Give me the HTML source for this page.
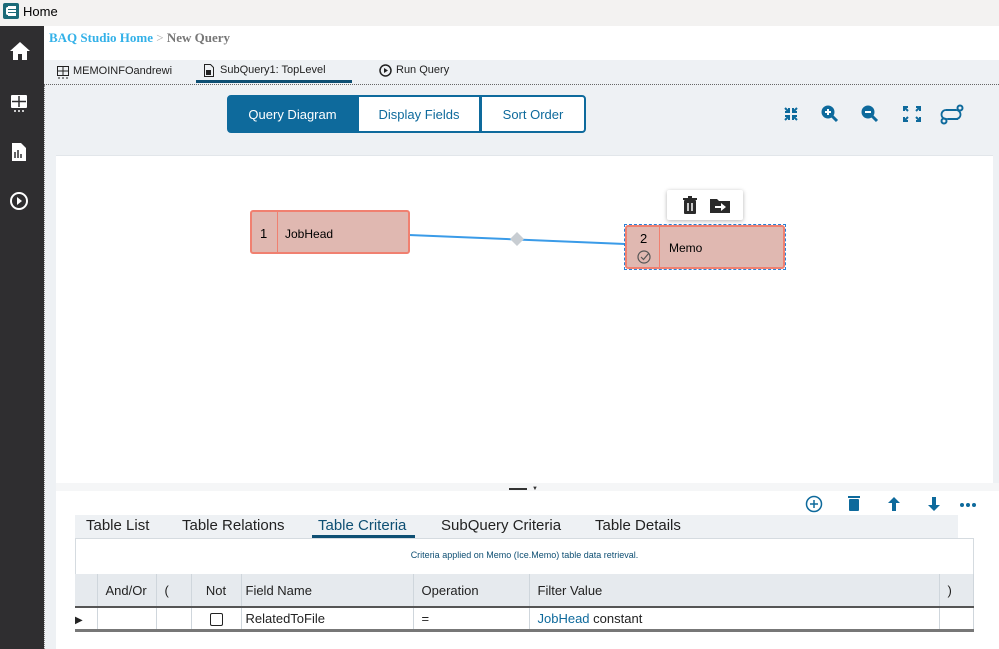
<!DOCTYPE html>
<html><head><style>
*{margin:0;padding:0;box-sizing:border-box}
body{width:999px;height:649px;overflow:hidden;font-family:"Liberation Sans",sans-serif;background:#fff;position:relative}
.abs{position:absolute}
.tb{left:0;top:0;width:999px;height:26px;background:#f3f2f1;font-size:13px}
.side{left:0;top:26px;width:44px;height:623px;background:#2f2e30}
.btn{height:38px;top:95px;border:2px solid #0e6a9c;color:#0e6a9c;font-size:13px;display:flex;align-items:center;justify-content:center;background:#fff}
.nar{font-family:"Liberation Sans Narrow","Liberation Sans",sans-serif}
.node{background:#e0b8b1;border:2px solid #f08070;border-radius:3px;font-size:12px}
th,td{border-right:1px solid #cfd6dc;font-weight:normal;text-align:left;padding-left:8px}
</style></head><body>
<div class="abs tb"><div class="abs" style="left:3px;top:3px;width:16px;height:16px;background:#1b6a78;border-radius:2px"><div class="abs" style="left:3px;top:4px;width:10px;height:8px;border:2px solid #fff;border-right:none;border-radius:2px 0 0 2px"></div><div class="abs" style="left:3px;top:7px;width:10px;height:2px;background:#fff"></div><div class="abs" style="left:5px;top:3px;width:8px;height:2px;background:#fff"></div><div class="abs" style="left:5px;top:11px;width:8px;height:2px;background:#fff"></div></div><span class="abs" style="left:23px;top:4px">Home</span></div>
<div class="abs side">
<svg class="abs" style="left:9px;top:15px" width="22" height="20" viewBox="0 0 22 20"><path d="M11 1L1 10h3v9h5v-6h4v6h5v-9h3z" fill="#fff"/></svg>
<svg class="abs" style="left:10px;top:68px" width="18" height="20" viewBox="0 0 18 20"><rect x="1" y="1" width="16" height="13" rx="1" fill="#fff"/><path d="M2 7.5h14M9 2v11" stroke="#2f2e30" stroke-width="1.5"/><path d="M4 17h2M8 17h2M12 17h2" stroke="#fff" stroke-width="1.5"/></svg>
<svg class="abs" style="left:11px;top:116px" width="16" height="20" viewBox="0 0 16 20"><path d="M1 1h9l5 5v13H1z" fill="#fff"/><path d="M4 10v6M7 8v8M10 12v4" stroke="#2f2e30" stroke-width="1.5"/></svg>
<svg class="abs" style="left:9px;top:165px" width="20" height="20" viewBox="0 0 20 20"><circle cx="10" cy="10" r="8" fill="none" stroke="#fff" stroke-width="2"/><path d="M8 6l5 4-5 4z" fill="#fff"/></svg>
</div>
<div class="abs" style="left:49px;top:30px;font-family:'Liberation Serif',serif;font-weight:bold;font-size:13px"><span style="color:#33b1e8">BAQ Studio Home</span> <span style="color:#aaa;font-weight:normal">&gt;</span> <span style="color:#777">New Query</span></div>
<div class="abs" style="left:44px;top:60px;width:955px;height:25px;background:#eef1f4;border-bottom:1px dotted #666;font-size:11px">
<svg class="abs" style="left:13px;top:6px" width="12" height="13" viewBox="0 0 12 13"><rect x="0.5" y="0.5" width="11" height="9" fill="none" stroke="#222"/><path d="M0 5h12M6 0v10" stroke="#222"/><path d="M1 12h2M5 12h2M9 12h2" stroke="#222"/></svg>
<span class="abs" style="left:29px;top:5px;color:#222">MEMOINFOandrewi</span>
<svg class="abs" style="left:160px;top:4px" width="10" height="13" viewBox="0 0 10 13"><path d="M.5.5h6l3 3v9h-9z" fill="none" stroke="#222"/><rect x="2" y="6" width="5" height="5" fill="#222"/></svg>
<span class="abs" style="left:176px;top:4px;color:#222">SubQuery1: TopLevel</span>
<div class="abs" style="left:152px;top:20px;width:156px;height:3px;background:#0e4f73"></div>
<svg class="abs" style="left:335px;top:4px" width="13" height="13" viewBox="0 0 13 13"><circle cx="6.5" cy="6.5" r="5.5" fill="none" stroke="#222" stroke-width="1.5"/><path d="M5 4l4 2.5L5 9z" fill="#222"/></svg>
<span class="abs" style="left:352px;top:4px;color:#222">Run Query</span>
</div>
<div class="abs" style="left:44px;top:85px;width:955px;height:70px;background:#eef1f4"></div>
<div class="abs" style="left:44px;top:85px;width:12px;height:564px;background:#eef1f4;border-left:1px dotted #888"></div>
<div class="abs btn" style="left:227px;width:131px;background:#0e6a9c;color:#fff;border-radius:4px 0 0 4px">Query Diagram</div>
<div class="abs btn" style="left:357px;width:124px">Display Fields</div>
<div class="abs btn" style="left:480px;width:106px;border-radius:0 4px 4px 0">Sort Order</div>
<svg class="abs" style="left:780px;top:103px" width="190" height="22" viewBox="0 0 190 22" fill="none" stroke="#0e6a9c" stroke-width="2">
<path d="M5 5l4 4M9 5v4H5M17 5l-4 4M13 5v4h4M5 17l4-4M5 13h4v4M17 17l-4-4M17 13h-4v4"/>
<circle cx="48" cy="9" r="5.5" fill="#0e6a9c"/><path d="M52 13l5 5" stroke-width="3"/><path d="M45 9h6M48 6v6" stroke="#fff"/>
<circle cx="88" cy="9" r="5.5" fill="#0e6a9c"/><path d="M92 13l5 5" stroke-width="3"/><path d="M85 9h6" stroke="#fff"/>
<path d="M124 8V4h4M124 4l4 4M136 4h4v4M140 4l-4 4M124 14v4h4M124 18l4-4M140 14v4h-4M140 18l-4-4"/>
<path d="M166 7h10M168 16h10" /><circle cx="180" cy="5" r="2.5"/><circle cx="164" cy="18" r="2.5"/><path d="M166 7a4.5 4.5 0 0 0 0 9h2M176 7a4.5 4.5 0 0 1 0 9" stroke-width="1.8"/>
</svg>
<div class="abs" style="left:56px;top:155px;width:937px;height:328px;background:#fff;border-top:1px solid #e2e6ea"></div>
<div class="abs" style="left:993px;top:85px;width:6px;height:400px;background:#eef1f4"></div>
<svg class="abs" style="left:400px;top:225px" width="240" height="30"><path d="M9 10L225 19" stroke="#3a9be8" stroke-width="2"/><path d="M117 7l7 7-7 7-7-7z" fill="#c8cdd2"/></svg>
<div class="abs node" style="left:250px;top:210px;width:160px;height:44px"><div class="abs" style="left:25px;top:0;height:40px;border-left:1px solid #f08070"></div><span class="abs" style="left:8px;top:14px;font-size:13px">1</span><span class="abs" style="left:33px;top:15px">JobHead</span></div>
<div class="abs" style="left:624px;top:224px;width:162px;height:46px;border:1px dashed #2a7fd4"></div>
<div class="abs node" style="left:625px;top:225px;width:160px;height:44px"><div class="abs" style="left:32px;top:0;height:40px;border-left:1px solid #f08070"></div><span class="abs" style="left:13px;top:4px;font-size:13px">2</span>
<svg class="abs" style="left:10px;top:23px" width="14" height="14"><circle cx="7" cy="7" r="6" fill="none" stroke="#555" stroke-width="1.2"/><path d="M4 7l2.5 2.5L12 3" fill="none" stroke="#555" stroke-width="1.2"/></svg><span class="abs" style="left:42px;top:14px">Memo</span></div>
<div class="abs" style="left:667px;top:190px;width:76px;height:30px;background:#fff;box-shadow:0 1px 4px rgba(0,0,0,.3);border-radius:2px">
<svg class="abs" style="left:14px;top:6px" width="18" height="18"><rect x="3" y="4" width="12" height="14" rx="1" fill="#2a2a2a"/><rect x="2" y="2" width="14" height="2" fill="#2a2a2a"/><rect x="7" y="0" width="4" height="2" fill="#2a2a2a"/><path d="M7 7v8M11 7v8" stroke="#fff" stroke-width="1.5"/></svg>
<svg class="abs" style="left:43px;top:7px" width="21" height="17"><path d="M0 2h7l2 2h11v12H0z" fill="#2a2a2a"/><path d="M5 9h6V6l5 4-5 4v-3H5z" fill="#fff"/></svg>
</div>
<div class="abs" style="left:56px;top:483px;width:943px;height:8px;background:#f5f6f7"></div>
<div class="abs" style="left:509px;top:488px;width:18px;height:2px;background:#333"></div><div class="abs" style="left:532px;top:486px;font-size:6px;color:#333">▼</div>
<svg class="abs" style="left:804px;top:494px" width="180" height="20" fill="#0e6a9c"><circle cx="10" cy="10" r="7.5" fill="none" stroke="#0e6a9c" stroke-width="1.5"/><path d="M6 10h8M10 6v8" stroke="#0e6a9c" stroke-width="1.5"/><rect x="45" y="5" width="10" height="12" rx="1"/><rect x="44" y="2" width="12" height="2"/><path d="M90 3l6 6h-4v8h-4V9h-4z"/><path d="M130 17l6-6h-4V3h-4v8h-4z"/><circle cx="158" cy="11" r="2"/><circle cx="164" cy="11" r="2"/><circle cx="170" cy="11" r="2"/></svg>
<div class="abs nar" style="left:75px;top:515px;width:883px;height:23px;background:#eef1f4;font-size:15px;color:#222">
<span class="abs" style="left:11px;top:2px">Table List</span><span class="abs" style="left:107px;top:2px">Table Relations</span><span class="abs" style="left:243px;top:2px;color:#0e4f73">Table Criteria</span><div class="abs" style="left:237px;top:20px;width:103px;height:3px;background:#0e4f73"></div><span class="abs" style="left:366px;top:2px">SubQuery Criteria</span><span class="abs" style="left:520px;top:2px">Table Details</span></div>
<div class="abs nar" style="left:75px;top:538px;width:899px;height:36px;border:1px solid #d5dbe0;border-bottom:none;font-size:9px;color:#0e4f73;text-align:center;padding-top:11px">Criteria applied on Memo (Ice.Memo) table data retrieval.</div>
<table class="abs nar" style="left:75px;top:574px;width:899px;border-collapse:collapse;font-size:13px;color:#222;table-layout:fixed">
<tr style="height:33px;background:#e6eaee;border-bottom:2px solid #555"><th style="width:22px"></th><th style="width:59px;padding-left:8px">And/Or</th><th style="width:35px">(</th><th style="width:50px;text-align:center;padding:0">Not</th><th style="width:172px;padding-left:4px">Field Name</th><th style="width:116px">Operation</th><th style="width:410px">Filter Value</th><th>)</th></tr>
<tr style="height:23px;border-bottom:3px solid #777"><td style="padding:0"><span style="font-size:10px">▶</span></td><td></td><td></td><td style="padding:0;text-align:center"><span style="display:inline-block;width:13px;height:13px;border:1.5px solid #222;border-radius:2px;vertical-align:middle"></span></td><td style="padding-left:4px">RelatedToFile</td><td>=</td><td><span style="color:#0e6a9c">JobHead</span> constant</td><td></td></tr>
</table>
</body></html>
